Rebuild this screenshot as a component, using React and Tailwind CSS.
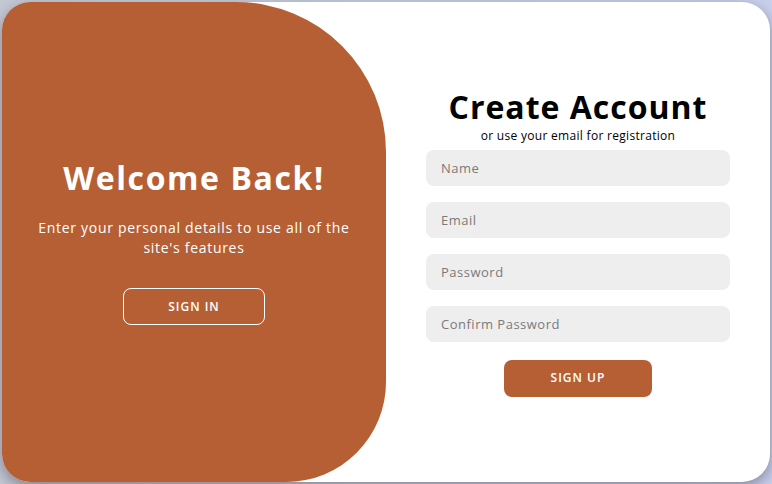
import { useState } from "react";

const FIELDS = ["Name", "Email", "Password", "Confirm Password"];

export default function App() {
    const [form, setForm] = useState({});

    return (
        <section
            className="w-[772px] h-[484px] flex items-center justify-center bg-gradient-to-r from-[#c5c9d6] to-[#c9d0ee]"
            style={{ fontFamily: '"Open Sans", "DejaVu Sans", sans-serif' }}
        >
            <div className="w-[768px] h-[480px] flex bg-white rounded-[28px] overflow-hidden shadow-[0_5px_15px_rgba(0,0,0,0.35)]">
                {/* Toggle panel */}
                <div className="w-1/2 h-full flex flex-col items-center justify-center bg-[#b65f35] rounded-[0_150px_100px_0] text-white text-center px-8">
                    <h1 className="text-[32px] leading-[38px] font-bold tracking-[1.6px]">Welcome Back!</h1>
                    <p className="text-[14px] leading-[20px] tracking-[0.7px] mt-[21px] mb-[30px]">
                        Enter your personal details to use all of the site's features
                    </p>
                    <button className="w-[142px] h-[37px] border border-white rounded-lg text-[12px] font-semibold tracking-[1px] uppercase cursor-pointer">
                        Sign In
                    </button>
                </div>

                {/* Sign up form */}
                <form className="w-1/2 h-full flex flex-col items-center justify-center px-10">
                    <h1 className="text-[32px] leading-[38px] font-bold tracking-[1px] text-black">Create Account</h1>
                    <span className="text-[12px] leading-[16px] tracking-[0.3px] text-black mt-[2px] mb-[6px]">
                        or use your email for registration
                    </span>
                    <div className="w-full flex flex-col gap-4">
                        {FIELDS.map((field) => (
                            <input
                                key={field}
                                type={field.includes("Password") ? "password" : "text"}
                                placeholder={field}
                                value={form[field] || ""}
                                onChange={(e) => setForm({ ...form, [field]: e.target.value })}
                                className="w-full h-9 bg-[#eeeeee] rounded-lg px-[15px] text-[13px] tracking-[0.5px] placeholder-[#7a7a7a] outline-none"
                            />
                        ))}
                    </div>
                    <button
                        type="button"
                        className="mt-[18px] w-[148px] h-[37px] bg-[#b65f35] text-white rounded-lg text-[12px] font-semibold tracking-[1px] uppercase cursor-pointer"
                    >
                        Sign Up
                    </button>
                </form>
            </div>
        </section>
    );
}
